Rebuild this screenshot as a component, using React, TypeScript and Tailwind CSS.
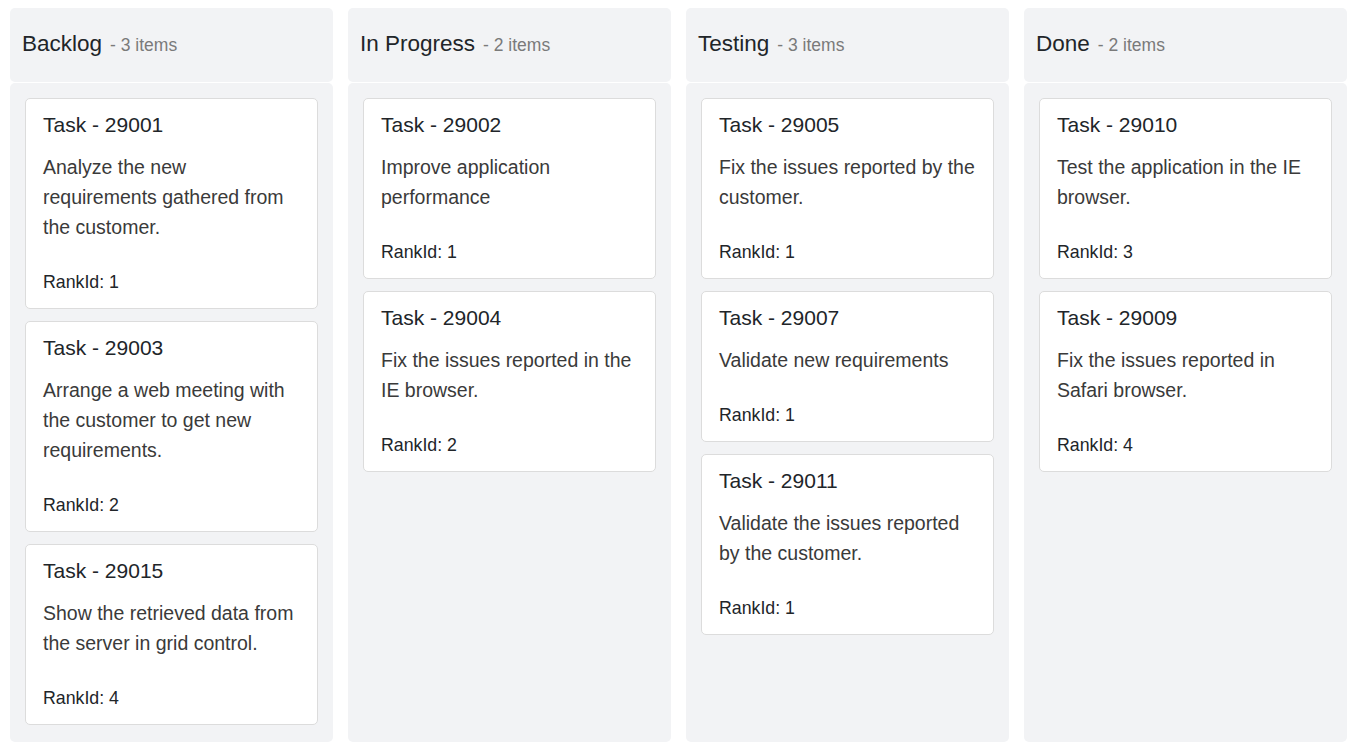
import React from "react";

type Card = { id: number; summary: string; rank: number };
type Column = { title: string; cards: Card[] };

const columns: Column[] = [
  {
    title: "Backlog",
    cards: [
      { id: 29001, summary: "Analyze the new requirements gathered from the customer.", rank: 1 },
      { id: 29003, summary: "Arrange a web meeting with the customer to get new requirements.", rank: 2 },
      { id: 29015, summary: "Show the retrieved data from the server in grid control.", rank: 4 },
    ],
  },
  {
    title: "In Progress",
    cards: [
      { id: 29002, summary: "Improve application performance", rank: 1 },
      { id: 29004, summary: "Fix the issues reported in the IE browser.", rank: 2 },
    ],
  },
  {
    title: "Testing",
    cards: [
      { id: 29005, summary: "Fix the issues reported by the customer.", rank: 1 },
      { id: 29007, summary: "Validate new requirements", rank: 1 },
      { id: 29011, summary: "Validate the issues reported by the customer.", rank: 1 },
    ],
  },
  {
    title: "Done",
    cards: [
      { id: 29010, summary: "Test the application in the IE browser.", rank: 3 },
      { id: 29009, summary: "Fix the issues reported in Safari browser.", rank: 4 },
    ],
  },
];

function TaskCard({ card }: { card: Card }) {
  return (
    <div className="bg-white border border-[#dcdcdc] rounded-[5px] pt-[14px] pb-[14px] pl-[17px] pr-[14px]">
      <div className="text-[21px] leading-[24px] text-[#212529]">Task - {card.id}</div>
      <div className="mt-[15px] text-[19.5px] leading-[30px] text-[#3a3a3a]">{card.summary}</div>
      <div className="mt-[28px] text-[17.75px] leading-[24px] text-[#212529]">RankId: {card.rank}</div>
    </div>
  );
}

export default function App() {
  return (
    <div
      className="w-[1360px] h-[748px] bg-white flex gap-[15px] pl-[10px] pt-[8px]"
      style={{ fontFamily: '"Liberation Sans", Arial, sans-serif' }}
    >
      {columns.map((col) => (
        <div key={col.title} className="w-[323px] flex flex-col">
          <div className="h-[74px] bg-[#f2f3f5] rounded-[5px] pl-[12px] pb-[2px] flex items-center">
            <span className="text-[22.5px] text-[#212529]">{col.title}</span>
            <span className="ml-[8px] mt-[2px] text-[17.5px] text-[#7a7a7a]">- {col.cards.length} items</span>
          </div>
          <div className="h-[659px] mt-[1px] bg-[#f2f3f5] rounded-[5px] px-[15px] pt-[15px] flex flex-col gap-[12px]">
            {col.cards.map((c) => (
              <TaskCard key={c.id} card={c} />
            ))}
          </div>
        </div>
      ))}
    </div>
  );
}
